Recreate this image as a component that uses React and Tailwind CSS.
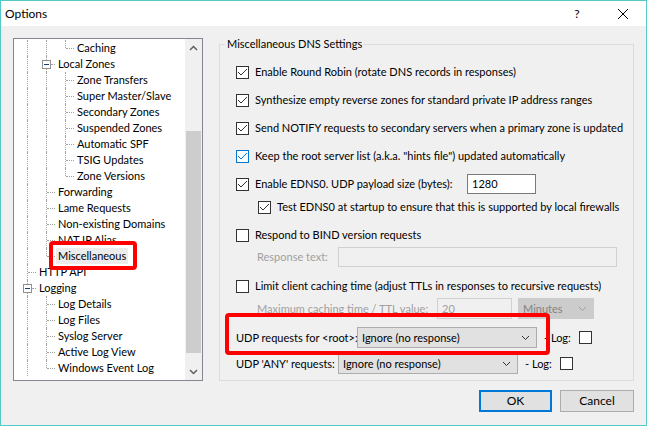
import React from 'react';

const lineLeft = ['left-[13px]', 'left-[32px]', 'left-[51px]'];
const boxLeft = ['left-[9px]', 'left-[28px]', 'left-[47px]'];
const hLeft = ['left-[14px]', 'left-[33px]', 'left-[52px]'];
const boxHLeft = ['left-[18px]', 'left-[37px]', 'left-[56px]'];
const textMl = ['ml-[23px]', 'ml-[42px]', 'ml-[61px]'];

const rows = [
  { l: 2, t: 'Caching', last: true, p: [1, 1] },
  { l: 1, t: 'Local Zones', box: true, p: [1] },
  { l: 2, t: 'Zone Transfers', p: [1, 1] },
  { l: 2, t: 'Super Master/Slave', p: [1, 1] },
  { l: 2, t: 'Secondary Zones', p: [1, 1] },
  { l: 2, t: 'Suspended Zones', p: [1, 1] },
  { l: 2, t: 'Automatic SPF', p: [1, 1] },
  { l: 2, t: 'TSIG Updates', p: [1, 1] },
  { l: 2, t: 'Zone Versions', last: true, p: [1, 1] },
  { l: 1, t: 'Forwarding', p: [1] },
  { l: 1, t: 'Lame Requests', p: [1] },
  { l: 1, t: 'Non-existing Domains', p: [1] },
  { l: 1, t: 'NAT IP Alias', p: [1] },
  { l: 1, t: 'Miscellaneous', last: true, p: [1], sel: true },
  { l: 0, t: 'HTTP API', p: [] },
  { l: 0, t: 'Logging', box: true, p: [] },
  { l: 1, t: 'Log Details', p: [1] },
  { l: 1, t: 'Log Files', p: [1] },
  { l: 1, t: 'Syslog Server', p: [1] },
  { l: 1, t: 'Active Log View', p: [1] },
  { l: 1, t: 'Windows Event Log', last: true, p: [1] },
];

const TreeRow = ({ r }) => (
  <div className="relative h-[16px] flex items-center">
    {r.p.map((on, i) =>
      on ? <span key={i} className={`absolute top-0 bottom-0 ${lineLeft[i]} border-l border-dotted border-[#a0a0a0]`} /> : null
    )}
    <span className={`absolute top-0 ${lineLeft[r.l]} border-l border-dotted border-[#a0a0a0] ${r.last ? 'h-[8px]' : 'h-[16px]'}`} />
    {r.box ? (
      <>
        <span className={`absolute top-[8px] ${boxHLeft[r.l]} w-[4px] border-t border-dotted border-[#a0a0a0]`} />
        <span className={`absolute top-[4px] ${boxLeft[r.l]} w-[9px] h-[9px] border border-[#919191] bg-white flex items-center justify-center`}>
          <span className="w-[5px] h-px bg-[#1f3a7a]" />
        </span>
      </>
    ) : (
      <span className={`absolute top-[8px] ${hLeft[r.l]} w-[8px] border-t border-dotted border-[#a0a0a0]`} />
    )}
    <span className={`${textMl[r.l]} px-[2px] leading-[16px] whitespace-nowrap ${r.sel ? 'bg-[#ececec]' : ''}`}>{r.t}</span>
  </div>
);

const Chevron = ({ up, color = '#606060', w = 1.5 }) => (
  <svg width="9" height="6" viewBox="0 0 9 6">
    <polyline points={up ? '1,5 4.5,1.5 8,5' : '1,1 4.5,4.5 8,1'} fill="none" stroke={color} strokeWidth={w} />
  </svg>
);

const Tree = () => (
  <div className="mt-[2px] w-[190px] h-[343px] border border-[#828790] bg-white flex">
    <div className="flex-1 pt-[1px] overflow-hidden">
      {rows.map((r) => (
        <TreeRow key={r.t} r={r} />
      ))}
    </div>
    <div className="w-[17px] bg-[#f0f0f0] flex flex-col">
      <div className="h-[17px] flex items-center justify-center">
        <Chevron up />
      </div>
      <div className="flex-1 px-px">
        <div className="mt-[75px] h-[222px] bg-[#cdcdcd]" />
      </div>
      <div className="h-[17px] flex items-center justify-center">
        <Chevron />
      </div>
    </div>
  </div>
);

const Check = ({ checked, blue }) => (
  <span className={`w-[13px] h-[13px] shrink-0 border bg-white flex items-center justify-center ${blue ? 'border-[#0078d7]' : 'border-[#333333]'}`}>
    {checked && (
      <svg width="11" height="11" viewBox="0 0 11 11">
        <polyline points="1,5 4,8 10,2" fill="none" stroke={blue ? '#0078d7' : '#333333'} strokeWidth="1" />
      </svg>
    )}
  </span>
);

const Select = ({ w, text, disabled }) => (
  <div className={`${w} h-[21px] border flex items-center justify-between pl-[4px] pr-[6px] ${disabled ? 'bg-[#cccccc] border-[#cccccc] text-[#838383]' : 'bg-[#e1e1e1] border-[#adadad]'}`}>
    <span className="whitespace-nowrap">{text}</span>
    <Chevron color={disabled ? '#a0a0a0' : '#333333'} w={1} />
  </div>
);

const CheckRow = ({ checked, blue, children, className = '' }) => (
  <div className={`h-[20px] flex items-center ${className}`}>
    <Check checked={checked} blue={blue} />
    <span className="ml-[6px] whitespace-nowrap">{children}</span>
  </div>
);

export default function App() {
  return (
    <div className="relative w-[647px] h-[426px] border border-[#55c8c8] flex flex-col text-[11px] leading-[16px] text-black font-[family-name:Lato,sans-serif]">
      <div className="h-[25px] bg-white flex items-center text-[12px]">
        <span className="pl-[4px]">Options</span>
        <div className="ml-auto flex h-full">
          <div className="w-[46px] flex items-center justify-center">?</div>
          <div className="w-[46px] flex items-center justify-center">
            <svg width="10" height="10" viewBox="0 0 10 10">
              <path d="M0 0 L10 10 M10 0 L0 10" stroke="#000" strokeWidth="1" />
            </svg>
          </div>
        </div>
      </div>

      <div className="flex-1 bg-[#f0f0f0] px-[12px] pt-[10px]">
        <div className="flex items-start">
          <Tree />
          <fieldset className="ml-[16px] w-[415px] h-[345px] border border-[#dcdcdc]">
            <legend className="ml-[5px] px-[2px] leading-[16px]">Miscellaneous DNS Settings</legend>
            <div className="pl-[16px] flex flex-col">
              <CheckRow checked className="mt-[10px]">Enable Round Robin (rotate DNS records in responses)</CheckRow>
              <CheckRow checked className="mt-[8px]">Synthesize empty reverse zones for standard private IP address ranges</CheckRow>
              <CheckRow checked className="mt-[8px]">Send NOTIFY requests to secondary servers when a primary zone is updated</CheckRow>
              <CheckRow checked blue className="mt-[8px]">Keep the root server list (a.k.a. "hints file") updated automatically</CheckRow>
              <div className="mt-[8px] h-[20px] flex items-center">
                <Check checked />
                <span className="ml-[6px] w-[212px] whitespace-nowrap">Enable EDNS0. UDP payload size (bytes):</span>
                <div className="w-[69px] h-[20px] border border-[#7a7a7a] bg-white pl-[4px] flex items-center">1280</div>
              </div>
              <CheckRow checked className="mt-[3px] ml-[22px]">Test EDNS0 at startup to ensure that this is supported by local firewalls</CheckRow>
              <CheckRow className="mt-[8px]">Respond to BIND version requests</CheckRow>
              <div className="mt-[2px] ml-[21px] h-[20px] flex items-center text-[#a0a0a0]">
                <span className="w-[81px] whitespace-nowrap">Response text:</span>
                <div className="w-[279px] h-[20px] border border-[#d0d0d0] bg-[#f0f0f0]" />
              </div>
              <CheckRow className="mt-[9px]">Limit client caching time (adjust TTLs in responses to recursive requests)</CheckRow>
              <div className="mt-[2px] ml-[21px] h-[21px] flex items-center text-[#a0a0a0]">
                <span className="w-[180px] whitespace-nowrap">Maximum caching time / TTL value:</span>
                <div className="w-[75px] h-[21px] border border-[#d0d0d0] bg-[#f0f0f0] pl-[4px] flex items-center">20</div>
                <div className="ml-[6px]">
                  <Select w="w-[76px]" text="Minutes" disabled />
                </div>
              </div>
              <div className="mt-[8px] h-[21px] flex items-center">
                <span className="w-[121px] whitespace-nowrap">UDP requests for &lt;root&gt;:</span>
                <Select w="w-[180px]" text="Ignore (no response)" />
                <span className="ml-[7px] w-[35px] whitespace-nowrap">- Log:</span>
                <Check />
              </div>
              <div className="mt-[5px] h-[21px] flex items-center">
                <span className="w-[102px] whitespace-nowrap">UDP 'ANY' requests:</span>
                <Select w="w-[180px]" text="Ignore (no response)" />
                <span className="ml-[7px] w-[35px] whitespace-nowrap">- Log:</span>
                <Check />
              </div>
            </div>
          </fieldset>
        </div>
        <div className="mt-[9px] flex justify-end gap-[8px]">
          <button className="w-[73px] h-[22px] border-2 border-[#0078d7] bg-[#e1e1e1] text-[12px]">OK</button>
          <button className="w-[74px] h-[22px] border border-[#adadad] bg-[#e1e1e1] text-[12px]">Cancel</button>
        </div>
      </div>

      <div className="absolute left-[48px] top-[240px] w-[88px] h-[29px] border-4 border-[#ff0000] rounded-[4px] pointer-events-none" />
      <div className="absolute left-[224px] top-[312px] w-[325px] h-[42px] border-4 border-[#ff0000] rounded-[4px] pointer-events-none" />
    </div>
  );
}
